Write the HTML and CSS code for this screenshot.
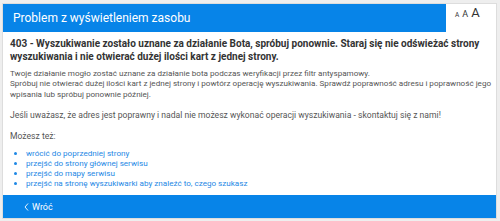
FILE: index.html
```html
<!DOCTYPE html>
<html lang="pl">
<head>
<meta charset="utf-8">
<title>Problem z wyświetleniem zasobu</title>
<link rel="stylesheet" href="styles.css">
</head>
<body>
<div class="panel">
  <div class="top">
    <div class="title-bar">Problem z wyświetleniem zasobu</div>
    <div class="fontsizer">
      <span class="fs fs-s">A</span>
      <span class="fs fs-m">A</span>
      <span class="fs fs-l">A</span>
    </div>
  </div>
  <div class="content">
    <h1 class="lead">403 - Wyszukiwanie zostało uznane za działanie Bota, spróbuj ponownie. Staraj się nie odświeżać strony wyszukiwania i nie otwierać dużej ilości kart z jednej strony.</h1>
    <p class="text intro">Twoje działanie mogło zostać uznane za działanie bota podczas weryfikacji przez filtr antyspamowy.<br>Spróbuj nie otwierać dużej ilości kart z jednej strony i powtórz operację wyszukiwania. Sprawdź poprawność adresu i poprawność jego wpisania lub spróbuj ponownie później.</p>
    <p class="text gap">Jeśli uważasz, że adres jest poprawny i nadal nie możesz wykonać operacji wyszukiwania - skontaktuj się z nami!</p>
    <p class="text gap2">Możesz też:</p>
    <ul class="links">
      <li><a href="#">wrócić do poprzedniej strony</a></li>
      <li><a href="#">przejść do strony głównej serwisu</a></li>
      <li><a href="#">przejść do mapy serwisu</a></li>
      <li><a href="#">przejść na stronę wyszukiwarki aby znaleźć to, czego szukasz</a></li>
    </ul>
  </div>
  <div class="footer">
    <svg class="chev" width="5" height="8" viewBox="0 0 5 8"><path d="M4 0.5 L1 4 L4 7.5" fill="none" stroke="#fff" stroke-width="0.9"/></svg>
    <span>Wróć</span>
  </div>
</div>
</body>
</html>
```
FILE: styles.css
```css
html, body {
  margin: 0;
}
body {
  background: #eeeeee;
  padding: 3px 3px 2px 2px;
  font-family: Roboto, "Liberation Sans", sans-serif;
}
.panel {
  background: #ffffff;
  border: 1px solid #dddddd;
}
.top {
  display: flex;
}
.title-bar {
  width: 443px;
  height: 28px;
  box-sizing: border-box;
  padding-left: 10px;
  background: #0784e8;
  color: #ffffff;
  font-size: 12px;
  display: flex;
  align-items: center;
}
.fontsizer {
  display: flex;
  align-items: baseline;
  gap: 3px;
  padding: 2px 0 0 9px;
  color: #333333;
}
.fs {
  line-height: 1;
}
.fs-s { font-size: 6.5px; }
.fs-m { font-size: 9px; }
.fs-l { font-size: 13px; }
.content {
  padding: 5px 0 0 7px;
}
.lead {
  margin: 0;
  font-size: 10px;
  line-height: 13.3px;
  font-weight: 700;
  color: #333333;
}
.text {
  margin: 4px 0 0;
  font-size: 8.6px;
  line-height: 10.5px;
  color: #555555;
}
.text.intro {
  font-size: 8.1px;
}
.text.gap {
  margin-top: 10.5px;
}
.text.gap2 {
  margin-top: 11px;
}
.links {
  margin: 6.5px 0 0;
  padding-left: 16px;
  font-size: 8.1px;
  line-height: 10px;
  color: #1e88e5;
}
.links a {
  color: #1e88e5;
  text-decoration: none;
}
.footer {
  margin-top: 7px;
  height: 23px;
  background: #0784e8;
  color: #ffffff;
  font-size: 9px;
  display: flex;
  align-items: center;
  gap: 3px;
  padding-left: 21px;
}
.chev {
  display: block;
}
```
